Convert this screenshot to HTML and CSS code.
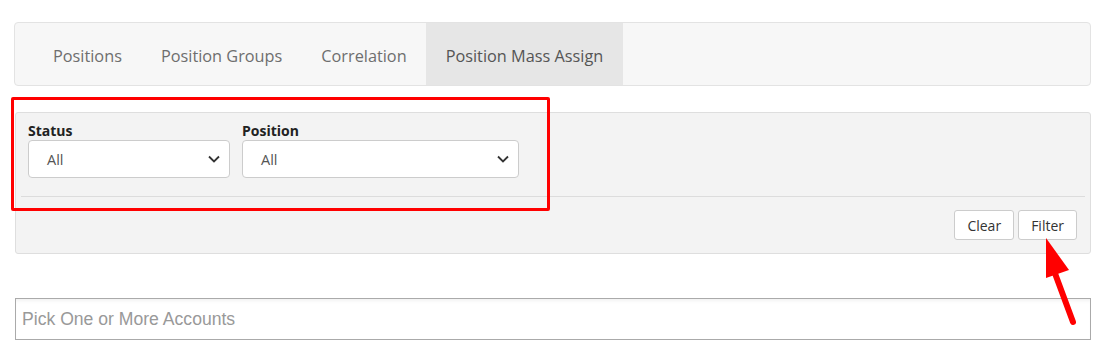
FILE: index.html
```html
<!DOCTYPE html>
<html lang="en">
<head>
  <meta charset="UTF-8" />
  <meta name="viewport" content="width=device-width, initial-scale=1.0" />
  <title>Position Mass Assign</title>
  <link rel="stylesheet" href="styles.css">
</head>
<body>
  <div class="page">
    <ul class="tabs">
      <li>Positions</li>
      <li>Position Groups</li>
      <li>Correlation</li>
      <li class="active">Position Mass Assign</li>
    </ul>

    <div class="filter-panel">
      <div class="fields">
        <div class="field status">
          <label>Status</label>
          <div class="select">All
            <svg width="12" height="8" viewBox="0 0 12 8"><path d="M1 1.5 L6 6.5 L11 1.5" fill="none" stroke="#333" stroke-width="1.8"/></svg>
          </div>
        </div>
        <div class="field position">
          <label>Position</label>
          <div class="select">All
            <svg width="12" height="8" viewBox="0 0 12 8"><path d="M1 1.5 L6 6.5 L11 1.5" fill="none" stroke="#333" stroke-width="1.8"/></svg>
          </div>
        </div>
      </div>
      <div class="actions">
        <button>Clear</button>
        <button>Filter</button>
      </div>
    </div>

    <div class="accounts">Pick One or More Accounts</div>

    <div class="highlight"></div>
    <svg class="arrow" width="60" height="100" viewBox="0 0 60 100">
      <line x1="38" y1="84" x2="18" y2="30" stroke="#ff0000" stroke-width="6" stroke-linecap="round"/>
      <polygon points="11,0 11,40 34,32" fill="#ff0000"/>
    </svg>
  </div>
</body>
</html>
```

FILE: styles.css
```css
body {
  margin: 0;
  background: #fff;
  font-family: 'Open Sans', 'Noto Sans', sans-serif;
  color: #333;
}
.page {
  position: relative;
  padding: 22px 18px 0 15px;
}
.tabs {
  list-style: none;
  margin: 0;
  padding: 0 0 0 19px;
  display: flex;
  height: 62px;
  background: #f7f7f7;
  border: 1px solid #e3e3e3;
  border-radius: 4px;
  margin-left: -1px;
}
.tabs li {
  padding: 3px 19.5px 0;
  display: flex;
  align-items: center;
  font-size: 16.3px;
  color: #6e6e6e;
}
.tabs li:first-child {
  padding-left: 19px;
}
.tabs li.active {
  background: #e6e6e6;
  color: #555;
}
.filter-panel {
  margin-top: 26px;
  background: #f3f3f3;
  border: 1px solid #dedede;
  border-radius: 3px;
  padding: 8px 5px 13px 5px;
}
.fields {
  display: flex;
  gap: 12px;
  padding: 0 7px 18px 7px;
  border-bottom: 1px solid #dcdcdc;
}
.field label {
  display: block;
  font-weight: 700;
  font-size: 14px;
  color: #222;
  line-height: 19px;
}
.status .select { width: 202px; }
.position .select { width: 277px; }
.select {
  box-sizing: border-box;
  height: 38px;
  background: #fff;
  border: 1px solid #ccc;
  border-radius: 4px;
  display: flex;
  align-items: center;
  justify-content: space-between;
  padding: 0 9px 0 18px;
  font-size: 14.5px;
  color: #555;
}
.actions {
  display: flex;
  justify-content: flex-end;
  gap: 4px;
  padding: 13px 8px 0 0;
}
.actions button {
  font-family: 'Open Sans', 'Noto Sans', sans-serif;
  font-size: 14px;
  color: #333;
  background: #fff;
  border: 1px solid #ccc;
  border-radius: 3px;
  height: 30px;
  padding: 0 12px;
}
.accounts {
  margin-top: 44px;
  height: 42px;
  box-sizing: border-box;
  border: 1px solid #aaa;
  padding: 0 6px;
  display: flex;
  align-items: center;
  font-family: 'Liberation Sans', Arial, sans-serif;
  font-size: 17.6px;
  color: #999;
  box-shadow: inset 0 4px 4px -3px rgba(0,0,0,0.08);
}
.highlight {
  position: absolute;
  left: 11px;
  top: 97px;
  width: 533px;
  height: 108px;
  border: 3px solid #ff0000;
  border-radius: 2px;
}
.arrow {
  position: absolute;
  left: 1035px;
  top: 238px;
}
```
